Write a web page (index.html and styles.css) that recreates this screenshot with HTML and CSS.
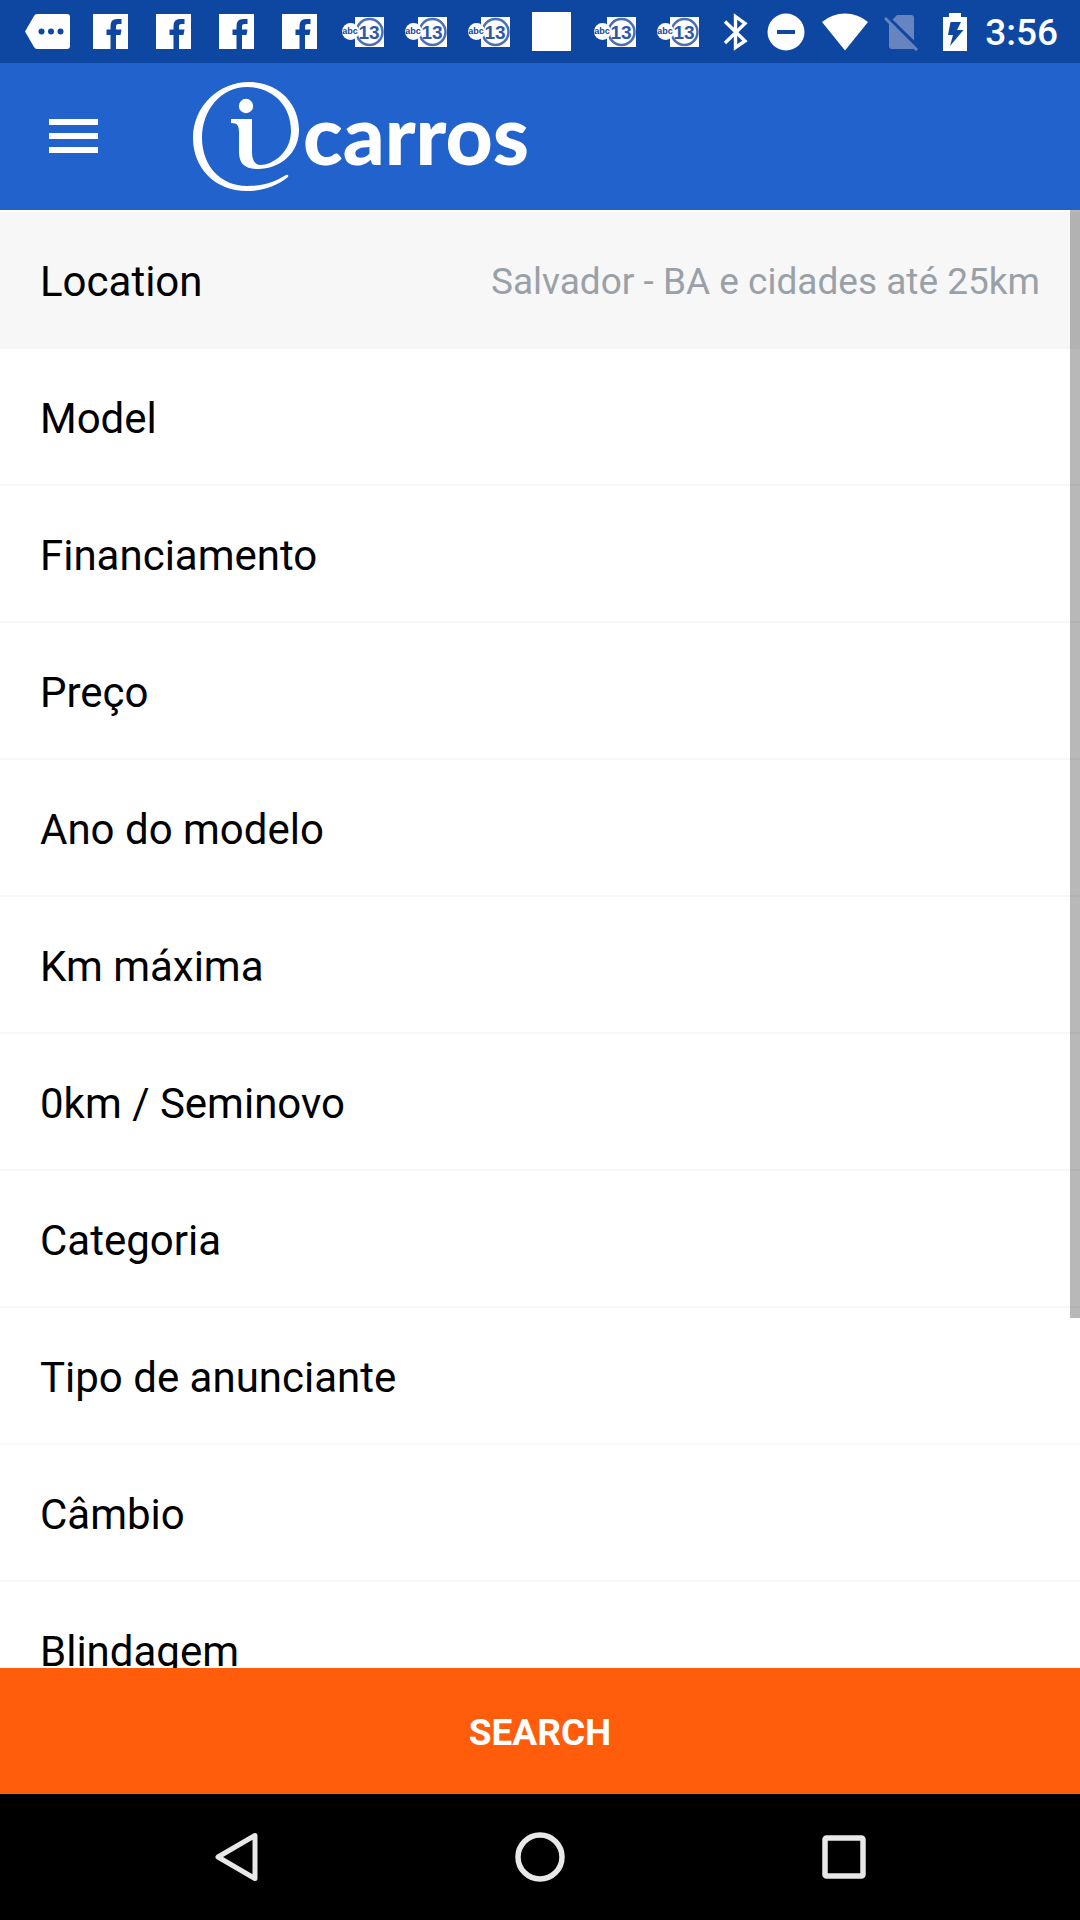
FILE: index.html
```html
<!DOCTYPE html>
<html lang="pt-BR">
<head>
<meta charset="utf-8">
<meta name="viewport" content="width=device-width, initial-scale=1">
<title>iCarros</title>
<link rel="stylesheet" href="styles.css">
</head>
<body>
<svg class="defs" aria-hidden="true">
  <symbol id="facebook" viewBox="0 0 35 35">
    <path fill="#fff" d="M0 0H35V35H23V21H27.500L28.500 15.500H23V12Q23 10 25.500 10H28.500V5H24Q17.500 5 17.500 12V15.500H13.500V21H17.500V35H0Z"/>
  </symbol>
  <symbol id="abc13" viewBox="0 0 42 30">
    <path fill="#fff" d="M13 0H42V30H13Z"/>
    <circle cx="27.500" cy="15" r="13" fill="#fff" stroke="#4a6db5" stroke-width="2.500"/>
    <circle cx="8.500" cy="14.500" r="8.500" fill="#fff"/>
    <text class="abc-name" x="8" y="17" text-anchor="middle">abc</text>
    <text class="abc-channel" x="27" y="22" text-anchor="middle">13</text>
  </symbol>
</svg>
<div class="screen">
  <div class="status">
    <div class="notices">
      <svg width="45" height="35" viewBox="0 0 45 35"><path fill="#fff" d="M12 0H42Q45 0 45 3V32Q45 35 42 35H12Q10 35 9 33L0 17.500L9 2Q10 0 12 0Z"/><g fill="#0d47a1"><circle cx="16.500" cy="17.500" r="3"/><circle cx="26" cy="17.500" r="3"/><circle cx="35.500" cy="17.500" r="3"/></g></svg>
      <svg width="35" height="35"><use href="#facebook"/></svg>
      <svg width="35" height="35"><use href="#facebook"/></svg>
      <svg width="35" height="35"><use href="#facebook"/></svg>
      <svg width="35" height="35"><use href="#facebook"/></svg>
      <svg width="42" height="30"><use href="#abc13"/></svg>
      <svg width="42" height="30"><use href="#abc13"/></svg>
      <svg width="42" height="30"><use href="#abc13"/></svg>
      <svg width="39" height="39"><rect width="39" height="39" fill="#fff"/></svg>
      <svg width="42" height="30"><use href="#abc13"/></svg>
      <svg width="42" height="30"><use href="#abc13"/></svg>
    </div>
    <div class="system">
      <svg width="28" height="38" viewBox="0 0 28 38"><path fill="none" stroke="#fff" stroke-width="3.400" d="M3 8.500L23 28L13.500 34.500V3.500L23 10.500L3 30"/></svg>
      <svg width="40" height="38" viewBox="0 0 40 38"><circle cx="20" cy="19" r="18.500" fill="#fff"/><path stroke="#0d47a1" stroke-width="4" d="M11 19H29"/></svg>
      <svg width="46" height="38" viewBox="0 0 46 38"><path fill="#fff" d="M0 9Q10 0.500 23 0.500T46 9L23 37.500Z"/></svg>
      <svg width="34" height="38" viewBox="0 0 34 38"><path fill="#6684c0" d="M13 2H27Q30 2 30 5V27.500L8.500 6.500ZM5 10L30.500 36H8Q5 36 5 33Z"/><path stroke="#6684c0" stroke-width="3" d="M1 5L33 37"/></svg>
      <svg width="35" height="38" viewBox="0 0 35 38"><path fill="#fff" d="M9 4H15V0H27V4H33V38H9Z"/><path fill="#0d47a1" d="M16.500 9H27L23 17H29.500L16 33L19 22H14Z"/></svg>
      <time class="clock">3:56</time>
    </div>
  </div>
  <header class="appbar">
    <button class="menu" type="button" aria-label="Menu"><svg width="49" height="34" viewBox="0 0 49 34"><path fill="#fff" d="M0 0H49V6H0ZM0 14H49V20H0ZM0 28H49V34H0Z"/></svg></button>
    <div class="logo">
      <svg width="106" height="110" viewBox="0 0 106 110" role="img" aria-label="i"><path fill="#fff" d="M38 37H59V70C59 79 63 83 67 83C80 83 98 70 98 49C98 22 78 5 54 5C28 5 9 28 9 56C9 84 28 104 54 104C70 104 82 100 93 93Q96 92 95 95C84 104 70 109 54 109C22 109 0 86 0 56C0 24 26 0 56 0C86 0 106 22 106 48C106 72 86 87 65 87C52 87 46 82 46 70V51C46 44 45 41 38 41Z"/><circle cx="53" cy="24" r="7.200" fill="#fff"/></svg>
      <span class="wordmark">carros</span>
    </div>
  </header>
  <main class="filters">
    <ul class="list">
      <li><button class="row row-set" type="button"><span>Location</span><span class="value">Salvador - BA e cidades até 25km</span></button></li>
      <li><button class="row" type="button">Model</button></li>
      <li><button class="row" type="button">Financiamento</button></li>
      <li><button class="row" type="button">Preço</button></li>
      <li><button class="row" type="button">Ano do modelo</button></li>
      <li><button class="row" type="button">Km máxima</button></li>
      <li><button class="row" type="button">0km / Seminovo</button></li>
      <li><button class="row" type="button">Categoria</button></li>
      <li><button class="row" type="button">Tipo de anunciante</button></li>
      <li><button class="row" type="button">Câmbio</button></li>
      <li><button class="row" type="button">Blindagem</button></li>
    </ul>
    <div class="scrollbar"></div>
  </main>
  <button class="search" type="button">SEARCH</button>
  <nav class="navbar">
    <button type="button" aria-label="Back"><svg width="50" height="50" viewBox="0 0 50 50"><path fill="none" stroke="#e8e8e8" stroke-width="5" stroke-linejoin="round" d="M44 3.500V46.500L7 25Z"/></svg></button>
    <button type="button" aria-label="Home"><svg width="50" height="50" viewBox="0 0 50 50"><circle cx="25" cy="25" r="22" fill="none" stroke="#e8e8e8" stroke-width="5.500"/></svg></button>
    <button type="button" aria-label="Overview"><svg width="50" height="50" viewBox="0 0 50 50"><rect x="6" y="6" width="38" height="38" rx="1.500" fill="none" stroke="#e8e8e8" stroke-width="5.500"/></svg></button>
  </nav>
</div>
</body>
</html>
```
FILE: styles.css
```css
* { box-sizing: border-box; }

body {
  margin: 0;
  font-family: Roboto, sans-serif;
  background: #fff;
}

button {
  margin: 0;
  padding: 0;
  border: 0;
  background: none;
  font: inherit;
  color: inherit;
  cursor: pointer;
}

svg { display: block; flex: none; }

.defs { position: absolute; width: 0; height: 0; }

.screen {
  display: flex;
  flex-direction: column;
  height: 100vh;
}

/* Status bar */
.status {
  flex: none;
  display: flex;
  justify-content: space-between;
  height: 63px;
  padding: 0 22px 0 16px;
  background: #0d47a1;
  color: #fff;
}

.notices {
  display: grid;
  grid-auto-flow: column;
  grid-auto-columns: 63px;
  place-items: center;
}

.system {
  display: flex;
  align-items: center;
  gap: 16px;
}

.clock {
  padding-top: 2px;
  font-size: 37px;
  font-weight: 500;
  line-height: 40px;
}

.abc-name {
  font: bold 9px "Liberation Sans", sans-serif;
  fill: #0d47a1;
}

.abc-channel {
  font: bold 19px "Liberation Sans", sans-serif;
  fill: #2f57a8;
}

/* App bar */
.appbar {
  flex: none;
  display: flex;
  align-items: center;
  gap: 95px;
  height: 147px;
  padding: 0 49px;
  background: #2262cc;
  color: #fff;
}

.menu { padding-bottom: 2px; }

.logo {
  display: flex;
  align-items: center;
  gap: 4px;
}

.wordmark {
  padding-bottom: 8px;
  font-family: Lato, sans-serif;
  font-size: 82px;
  font-weight: 900;
  line-height: 96px;
}

/* Filter list */
.filters {
  position: relative;
  flex: 1;
  min-height: 0;
  overflow: hidden;
}

.list {
  margin: 0;
  padding: 2px 0 0;
  list-style: none;
}

.row {
  display: flex;
  align-items: center;
  justify-content: space-between;
  width: 100%;
  height: 137px;
  padding: 4px 40px 0;
  border-bottom: 2px solid #f7f7f7;
  font-size: 42px;
  line-height: 50px;
  color: #000;
  text-align: left;
}

.row-set { background: #f7f7f7; }

.value {
  font-size: 37px;
  color: #9aa0a8;
}

.scrollbar {
  position: absolute;
  top: 0;
  right: 0;
  width: 10px;
  height: 76%;
  background: rgba(0, 0, 0, 0.28);
}

.search {
  flex: none;
  height: 126px;
  padding-top: 2px;
  background: #ff5c0c;
  color: #fff;
  font-size: 37px;
  font-weight: 700;
}

/* System navigation */
.navbar {
  flex: none;
  display: flex;
  height: 126px;
  padding: 0 84px;
  background: #000;
}

.navbar button {
  flex: 1;
  display: grid;
  place-items: center;
}
```
